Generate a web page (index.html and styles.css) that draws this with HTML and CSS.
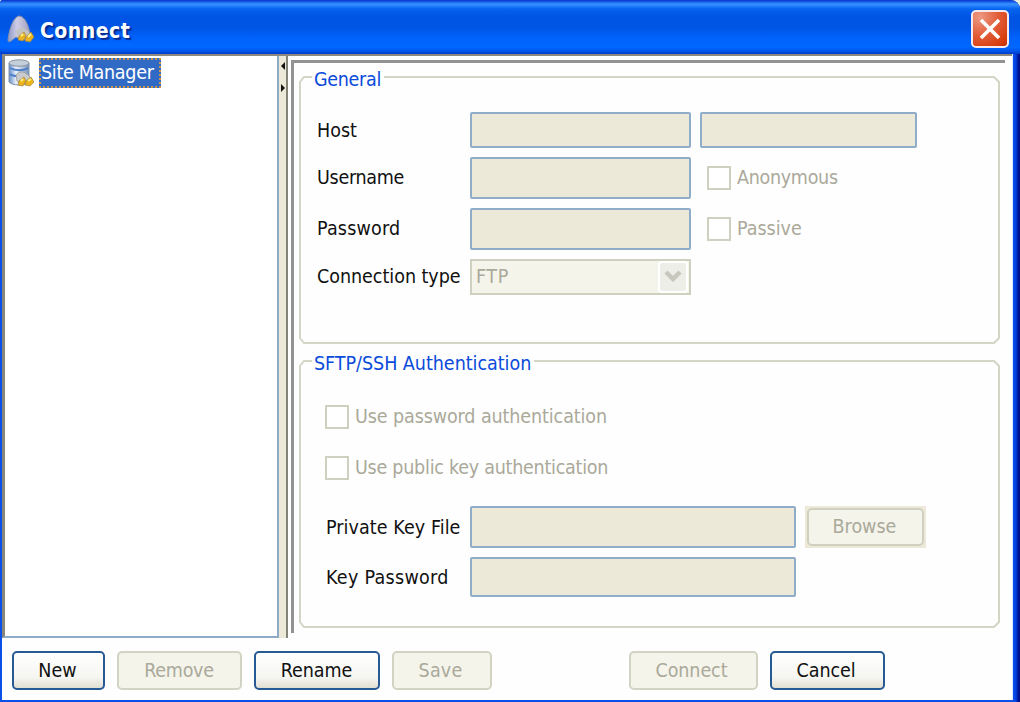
FILE: index.html
```html
<!DOCTYPE html>
<html lang="en">
<head>
<meta charset="utf-8">
<title>Connect</title>
<link rel="stylesheet" href="styles.css">
</head>
<body>
<div class="window">
  <header class="titlebar">
    <svg class="app-icon" width="28" height="30" viewBox="0 0 28 30">
      <defs>
        <linearGradient id="cone" x1="0" x2="1"><stop offset="0" stop-color="#8e99c8"/><stop offset=".4" stop-color="#cfcde6"/><stop offset="1" stop-color="#9d99bf"/></linearGradient>
      </defs>
      <path d="M1 25C2 15 6 2 12 1c6 0 10 10 12 22l-10 2-5-3-5 4c-2 1-3 1-3-1z" fill="url(#cone)" stroke="#8990a5"/>
      <path d="M9 16c3-4 8-4 12 0l3 4-5 5-9-4z" fill="#c3c3c4"/>
      <path d="M12 21l5-4 2 4-3 5-5-1zM19 22l5-5 3 5-4 5-5-1z" fill="#e9b322" stroke="#a18443" stroke-width=".7"/>
      <path d="M14 21l2-2M21 22l3-3" stroke="#fff08a" stroke-width="2"/>
    </svg>
    <h1 class="title">Connect</h1>
    <button class="close" aria-label="Close">
      <svg width="22" height="22" viewBox="0 0 22 22"><path d="M2 2L20 20M20 2L2 20" stroke="#fff" stroke-width="3.6"/></svg>
    </button>
  </header>
  <main class="content">
    <div class="split">
      <nav class="tree">
        <svg class="site-icon" width="26" height="28" viewBox="0 0 26 28">
          <defs>
            <linearGradient id="drum" x1="0" x2="1"><stop offset="0" stop-color="#668fc9"/><stop offset=".35" stop-color="#e9f1fa"/><stop offset="1" stop-color="#7893b9"/></linearGradient>
          </defs>
          <path d="M1 4v19c3 4 16 4 20 0V4z" fill="url(#drum)" stroke="#8195ad"/>
          <ellipse cx="11" cy="4" rx="10" ry="3.2" fill="#c5cfdb" stroke="#8995a2"/>
          <path d="M2 9c5 3 14 3 18 0M2 15c2 2 5 2 7 2" fill="none" stroke="#4e7fca" stroke-width="2"/>
          <path d="M8 16c3-4 8-4 12 0l4 4-5 5-10-3z" fill="#c9cacb" stroke="#9b9b9b" stroke-width=".8"/>
          <path d="M11 22l5-4 2 4-3 5-5-1zM18 22l5-4 3 5-4 4-5-1z" fill="#edb51c" stroke="#a18443" stroke-width=".7"/>
          <path d="M13 22l2-2M20 22l3-2" stroke="#fff08a" stroke-width="2"/>
        </svg>
        <span class="node">Site Manager</span>
      </nav>
      <div class="divider">
        <svg width="6" height="34" viewBox="0 0 6 34"><path d="M5 0v8L1 4zM1 22v8l4-4z" fill="#111"/></svg>
      </div>
      <section class="details">
        <section class="group">
          <svg class="outline" width="702" height="268" viewBox="0 0 702 268"><path d="M5 1H695L700 6V262L695 267H5L1 262V6Z"/></svg>
          <h2 class="legend legend-general">General</h2>
          <div class="fields">
            <label class="t-host">Host</label><div class="field"></div><div class="field"></div>
            <label class="t-user">Username</label><div class="field"></div>
            <div class="check"><i class="box"></i><span class="t-anon">Anonymous</span></div>
            <label class="t-pass">Password</label><div class="field"></div>
            <div class="check"><i class="box"></i><span class="t-passive">Passive</span></div>
            <label class="t-type">Connection type</label>
            <div class="combo"><span class="t-ftp">FTP</span><div class="arrow"><svg width="20" height="14" viewBox="0 0 20 14"><path d="M3 2l7 7 7-7" fill="none" stroke="#c7c7bd" stroke-width="4.500"/></svg></div></div>
          </div>
        </section>
        <section class="group">
          <svg class="outline" width="702" height="268" viewBox="0 0 702 268"><path d="M5 1H695L700 6V262L695 267H5L1 262V6Z"/></svg>
          <h2 class="legend legend-ssh">SFTP/SSH Authentication</h2>
          <div class="auth">
            <div class="check"><i class="box"></i><span class="t-usepass">Use password authentication</span></div>
            <div class="check"><i class="box"></i><span class="t-usekey">Use public key authentication</span></div>
          </div>
          <div class="keys">
            <label class="t-keyfile">Private Key File</label><div class="field"></div><button class="btn off browse">Browse</button>
            <label class="t-keypass">Key Password</label><div class="field"></div>
          </div>
        </section>
      </section>
    </div>
    <footer class="actions">
      <button class="btn new">New</button>
      <button class="btn off remove">Remove</button>
      <button class="btn rename">Rename</button>
      <button class="btn off save">Save</button>
      <button class="btn off connect">Connect</button>
      <button class="btn cancel">Cancel</button>
    </footer>
  </main>
</div>
</body>
</html>
```
FILE: styles.css
```css
* { box-sizing: border-box; }
body {
  margin: 0;
  background: #ece9d8;
  font: 19.5px/24px "DejaVu Sans Condensed", "DejaVu Sans", sans-serif;
  font-stretch: condensed;
  letter-spacing: -0.3px;
  color: #111;
}
button { font: inherit; font-stretch: inherit; letter-spacing: inherit; padding: 0; margin: 0; }
label, span, h1, h2, button { white-space: nowrap; }
.window {
  width: 1020px;
  height: 702px;
  display: flex;
  flex-direction: column;
  padding: 0 7px 2px 2px;
  border-radius: 3px 9px 0 0;
  overflow: hidden;
  background: linear-gradient(90deg, #0a50e8 0, #0a50e8 1013px, #0747e9 1015px, #0030c8 1017px, #00138c 1018px, #00138c 100%);
}
.titlebar {
  height: 54px;
  flex: none;
  display: flex;
  align-items: center;
  margin: 0 -7px 0 -2px;
  padding: 4px 11px 0 7px;
  background: linear-gradient(#0831c8 0, #1763ed 2px, #3992ff 4px, #2581fb 6px, #0663ee 9px, #0054e3 17px, #0055e5 28px, #0062fb 38px, #0068ff 47px, #0055eb 51px, #003bc5 54px);
}
.app-icon { display: block; margin-top: 2px; }
.title {
  margin: 4px auto 0 5px;
  font: bold 21px/28px "DejaVu Sans Condensed", "DejaVu Sans", sans-serif;
  font-stretch: condensed;
  letter-spacing: 0.5px;
  color: #fff;
  text-shadow: 2px 2px 1px #052c91;
}
.close {
  width: 38px;
  height: 38px;
  display: grid;
  place-items: center;
  border: 2px solid #f3e9ef;
  border-radius: 5px;
  background: radial-gradient(circle at 20% 15%, #ed9a84, #e25e3a 45%, #d63c0c 85%, #b92c08);
}
.content { flex: 1; min-height: 0; background: #fefefe; display: flex; flex-direction: column; border-right: 1px solid #dce8ff; }
.split { height: 584px; flex: none; display: flex; border-top: 2px solid #8b8980; }
.tree {
  width: 277px;
  height: 582px;
  display: flex;
  align-items: flex-start;
  padding: 2px 0 0 3px;
  border-left: 3px solid #87867d;
  border-right: 2px solid #8eabc8;
  border-bottom: 2px solid #8eabc8;
  background: #fff;
}
.site-icon { margin-top: 1px; }
.node {
  width: 122px;
  height: 30px;
  margin-left: 5px;
  padding-top: 1px;
  color: #fff;
  background: #316ac5;
  border: 2px dotted #c9954a;
}
.divider { width: 9px; padding: 6px 0 0 1px; background: #ece9d8; border-right: 2px solid #85847b; }
.divider svg { display: block; }
.details {
  width: 714px;
  height: 573px;
  margin: 4px 0 0 3px;
  padding: 13px 0 0 5px;
  border: 3px solid #929292;
  border-right: 0;
  border-bottom: 0;
}
.group { position: relative; width: 702px; height: 268px; margin-bottom: 16px; }
.outline { position: absolute; inset: 0; fill: none; stroke: #d5d5c5; stroke-width: 2; }
.legend {
  position: absolute;
  left: 13px;
  top: -8px;
  margin: 0;
  padding: 0 3px 0 2px;
  background: #fefefe;
  color: #0a4bdb;
  font: inherit;
  font-stretch: inherit;
}
.legend-ssh { letter-spacing: -0.03px; }
.fields {
  position: relative;
  display: grid;
  grid-template-columns: 144px 221px 217px;
  grid-template-rows: 36px 42px 42px 36px;
  column-gap: 9px;
  row-gap: 9px;
  padding: 36px 0 0 18px;
}
.fields label { margin-right: -9px; }
label { align-self: center; }
.t-host { padding-top: 2px; letter-spacing: 0; }
.t-pass { letter-spacing: 0.2px; }
.t-passive { letter-spacing: 0; }
.t-type { letter-spacing: -0.03px; }
.t-ftp { letter-spacing: 0.6px; }
.t-usepass { letter-spacing: -0.1px; }
.t-usekey { letter-spacing: -0.25px; }
.t-keyfile { padding: 1px 0 0 1px; letter-spacing: 0.08px; }
.t-keypass { padding: 1px 0 0 1px; letter-spacing: 0.3px; }
.field { background: #ece9d8; border: 2px solid #8fadc9; border-radius: 2px; }
.check { display: flex; align-items: center; gap: 6px; color: #aaa99a; }
.fields .check { padding-left: 7px; }
.box { width: 24px; height: 24px; border: 2px solid #d0d0c0; background: #fff; }
.combo {
  display: flex;
  align-items: center;
  justify-content: space-between;
  padding: 0 1px 0 4px;
  border: 2px solid #d0d0c0;
  background: #f4f4eb;
  color: #aaa99a;
}
.arrow { width: 30px; height: 32px; display: grid; place-items: center; border: 2px solid #fff; border-radius: 4px; background: #eeeee8; }
.auth { position: relative; display: grid; grid-template-rows: 24px 24px; row-gap: 27px; padding: 45px 0 0 26px; }
.keys {
  position: relative;
  display: grid;
  grid-template-columns: 145px 326px 121px;
  grid-template-rows: 42px 40px;
  row-gap: 9px;
  padding: 26px 0 0 26px;
}
.keys .browse {
  width: 121px;
  height: 42px;
  margin-left: 9px;
  padding-right: 2px;
  border: 2px solid #ece9d8;
  border-radius: 0;
  background: #ece9d8;
  position: relative;
  z-index: 0;
  letter-spacing: 0;
}
.keys .browse::before {
  content: "";
  position: absolute;
  inset: 0;
  z-index: -1;
  border: 2px solid #d0d0c0;
  border-radius: 5px;
  background: #f4f4eb;
}
.actions { display: flex; padding: 13px 0 0 10px; }
.btn {
  height: 39px;
  border: 2px solid #275992;
  border-radius: 5px;
  background: linear-gradient(#fff, #f5f5f1 70%, #e2dfd2);
  color: #111;
}
.off { border-color: #d3d3c4; background: #f4f4eb; color: #aaa99a; }
.new { width: 93px; padding-right: 2px; letter-spacing: 0; }
.remove { width: 125px; margin-left: 12px; padding-right: 1px; }
.rename { width: 126px; margin-left: 12px; padding-right: 1px; letter-spacing: -0.1px; }
.save { width: 100px; margin-left: 12px; padding-right: 3px; letter-spacing: 0.2px; }
.connect { width: 129px; margin-left: 137px; padding-right: 4px; letter-spacing: -0.1px; }
.cancel { width: 115px; margin-left: 12px; padding-right: 3px; letter-spacing: -0.1px; }
```
